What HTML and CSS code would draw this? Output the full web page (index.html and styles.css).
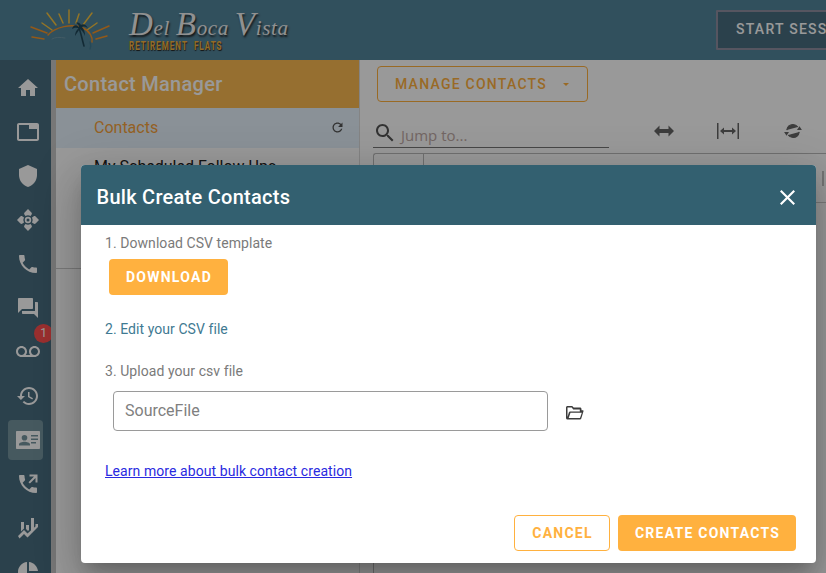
FILE: index.html
```html
<!DOCTYPE html>
<html lang="en">
<head>
<meta charset="utf-8">
<title>Bulk Create Contacts</title>
<link rel="stylesheet" href="styles.css">
</head>
<body>
<div class="app">
  <header class="topbar">
    <div class="logo">
      <svg class="sun" width="80" height="44" viewBox="30 8 80 44" fill="none" stroke-linecap="round">
        <g stroke="#f5c340" stroke-width="1.5">
          <path d="M47 13 L56 25"/><path d="M59 14 L63 23"/><path d="M69 10 L69 23"/><path d="M79 14 L76 23"/><path d="M92 13 L83 25"/><path d="M97 23 L87 30"/><path d="M42 23 L52 30"/>
        </g>
        <g stroke="#f59428" stroke-width="1.5">
          <path d="M31 27 L47 33"/><path d="M32 37 L44 39"/><path d="M109 26 L93 33"/><path d="M107 36 L96 39"/>
          <path d="M48 35 C55 27 72 23 83 28 C90 31 93 38 92 42"/>
        </g>
        <path d="M90 42 C91 45 91 47 90 49" stroke="#3f7a92" stroke-width="1.4"/>
        <path d="M79 28 C81 33 82 39 84 46" stroke="#1f4658" stroke-width="1.6"/>
        <path d="M79 27 C76 24 73 25 72 29 C75 27 77 28 79 28 C76 30 75 33 75 36 C77 33 79 30 80 29 C83 31 84 34 85 36 C85 32 84 29 82 27 C85 26 87 27 88 29 C87 25 83 23 81 25 C80 23 78 22 76 23 C78 24 79 25 79 27Z" fill="#1f4658"/>
        <path d="M52 39 C55 37 60 37 65 38" stroke="#6f97a8" stroke-width="1"/>
      </svg>
      <div class="brand">
        <span class="brand-name"><span class="cap">D</span>el <span class="cap">B</span>oca <span class="cap">V</span>ista</span>
        <span class="brand-sub">RETIREMENT&nbsp; FLATS</span>
      </div>
    </div>
    <button class="session">START SESSION</button>
  </header>
  <div class="body">
    <nav class="rail">
      <svg class="ico" viewBox="0 0 24 24"><path d="M10 20v-6h4v6h5v-8h3L12 3 2 12h3v8z"/></svg>
      <svg class="ico" viewBox="0 0 24 24"><path d="M21 3H3c-1.1 0-2 .9-2 2v14c0 1.1.9 2 2 2h18c1.1 0 2-.9 2-2V5c0-1.1-.9-2-2-2zm0 16H3V5h10v4h8v10z"/></svg>
      <svg class="ico" viewBox="0 0 24 24"><path d="M12 1L3 5v6c0 5.55 3.84 10.74 9 12 5.16-1.26 9-6.45 9-12V5l-9-4z"/></svg>
      <svg class="ico" viewBox="0 0 24 24"><path fill-rule="evenodd" d="M12 1l3.400 3.400c.6.6.6 1.500.2 2.100L14.500 8a5 5 0 0 0-5 0L8.400 6.500c-.4-.6-.4-1.500.2-2.100zM12 23l-3.400-3.400c-.6-.6-.6-1.500-.2-2.100L9.500 16a5 5 0 0 0 5 0l1.100 1.500c.4.6.4 1.500-.2 2.100zM1 12l3.400-3.400c.6-.6 1.500-.6 2.100-.2L8 9.500a5 5 0 0 0 0 5l-1.500 1.100c-.6.4-1.500.4-2.100-.2zM23 12l-3.400 3.400c-.6.6-1.500.6-2.100.2L16 14.500a5 5 0 0 0 0-5l1.500-1.100c.6-.4 1.500-.4 2.100.2zM12 8.800a3.200 3.200 0 1 0 0 6.400 3.200 3.200 0 0 0 0-6.400zm0 1.700a1.500 1.500 0 1 1 0 3 1.500 1.500 0 0 1 0-3z"/></svg>
      <svg class="ico" viewBox="0 0 24 24"><path d="M6.620 10.790c1.440 2.830 3.760 5.140 6.590 6.590l2.200-2.200c.27-.27.67-.36 1.020-.24 1.120.37 2.330.57 3.570.57.55 0 1 .45 1 1V20c0 .55-.45 1-1 1-9.390 0-17-7.610-17-17 0-.55.45-1 1-1h3.500c.55 0 1 .45 1 1 0 1.250.2 2.450.57 3.570.11.35.03.74-.25 1.020l-2.200 2.200z"/></svg>
      <svg class="ico" viewBox="0 0 24 24"><path d="M21 6h-2v9H6v2c0 .55.45 1 1 1h11l4 4V7c0-.55-.45-1-1-1zm-4 6V3c0-.55-.45-1-1-1H3c-.55 0-1 .45-1 1v14l4-4h10c.55 0 1-.45 1-1z"/></svg>
      <div class="rail-badge-wrap">
        <svg class="ico" viewBox="0 0 24 24"><path d="M18.500 6C15.460 6 13 8.460 13 11.500c0 1.330.47 2.550 1.260 3.500H9.740c.79-.95 1.260-2.170 1.260-3.500C11 8.460 8.540 6 5.500 6S0 8.460 0 11.500 2.460 17 5.500 17h13c3.040 0 5.500-2.460 5.500-5.500S21.540 6 18.500 6zm-13 9C3.570 15 2 13.430 2 11.500S3.570 8 5.500 8 9 9.570 9 11.500 7.430 15 5.500 15zm13 0c-1.930 0-3.500-1.570-3.500-3.500S16.570 8 18.500 8 22 9.570 22 11.500 20.430 15 18.500 15z"/></svg>
        <span class="badge">1</span>
      </div>
      <svg class="ico" viewBox="0 0 24 24"><path d="M13 3c-4.970 0-9 4.030-9 9H1l3.890 3.890.07.14L9 12H6c0-3.870 3.130-7 7-7s7 3.130 7 7-3.130 7-7 7c-1.930 0-3.680-.79-4.940-2.060l-1.420 1.420C8.270 19.990 10.510 21 13 21c4.970 0 9-4.030 9-9s-4.030-9-9-9zm-1 5v5l4.280 2.540.72-1.210-3.500-2.080V8H12z"/></svg>
      <div class="rail-active">
        <svg class="ico" viewBox="0 0 26 24"><path fill-rule="evenodd" d="M2 3h22c.6 0 1 .4 1 1v16c0 .6-.4 1-1 1H2c-.6 0-1-.4-1-1V4c0-.6.4-1 1-1zm7.500 4a2.800 2.800 0 1 0 0 5.600 2.800 2.800 0 0 0 0-5.600zM4 17.500h11v-1.200c0-1.600-3.200-2.600-5.500-2.600S4 14.700 4 16.300zM16 7v1.500h7V7zm0 3.500V12h7v-1.500zm0 3.500v1.500h5V14z"/></svg>
      </div>
      <svg class="ico" viewBox="0 0 24 24"><path d="M6.620 10.790c1.440 2.830 3.760 5.140 6.590 6.590l2.200-2.200c.27-.27.67-.36 1.020-.24 1.120.37 2.330.57 3.570.57.55 0 1 .45 1 1V20c0 .55-.45 1-1 1-9.390 0-17-7.610-17-17 0-.55.45-1 1-1h3.500c.55 0 1 .45 1 1 0 1.250.2 2.450.57 3.570.11.35.03.74-.25 1.020l-2.200 2.200z"/><path d="M13.500 2.500h8v8h-2V6l-5.600 5.600-1.400-1.400L18 4.500h-4.500z"/></svg>
      <svg class="ico" viewBox="0 0 24 24"><path d="M5 6h3v6.500l-3 3zM10 9h3v5l-1 1-2-2zM15 2h3v10.500l-3 3zM19.500 8H22v3l-2.500 2.500zM2 20l6-6 3.500 3.500L21 9v3l-9.500 9.500L8 18l-4.500 4.500z"/></svg>
      <svg class="ico" viewBox="0 0 24 24"><path d="M11 2v20c-5.100-.5-9-4.800-9-10s3.900-9.500 9-10zm2 0v9h9c-.5-4.700-4.300-8.500-9-9zm0 11v9c4.700-.5 8.500-4.300 9-9z"/></svg>
    </nav>
    <div class="strip"></div>
    <aside class="panel">
      <h2 class="panel-title">Contact Manager</h2>
      <div class="panel-row panel-row-active">
        <span>Contacts</span>
        <svg class="refresh" viewBox="0 0 24 24"><path d="M17.650 6.350C16.200 4.900 14.210 4 12 4c-4.420 0-7.990 3.580-7.990 8s3.570 8 7.990 8c3.730 0 6.840-2.550 7.730-6h-2.080c-.82 2.330-3.040 4-5.650 4-3.310 0-6-2.690-6-6s2.690-6 6-6c1.660 0 3.140.69 4.220 1.780L13 11h7V4l-2.350 2.350z"/></svg>
      </div>
      <div class="panel-row panel-row-plain"><span>My Scheduled Follow Ups</span></div>
      <div class="panel-rule"></div>
    </aside>
    <main class="content">
      <button class="manage">MANAGE CONTACTS<span class="caret"></span></button>
      <div class="tools">
        <div class="jump">
          <svg class="search" viewBox="3 3 18 18"><path d="M15.500 14h-.79l-.28-.27C15.410 12.590 16 11.110 16 9.500 16 5.910 13.090 3 9.500 3S3 5.910 3 9.500 5.910 16 9.500 16c1.610 0 3.090-.59 4.230-1.570l.27.28v.79l5 4.990L20.490 19l-4.990-5zm-6 0C7.010 14 5 11.990 5 9.500S7.010 5 9.500 5 14 7.010 14 9.500 11.990 14 9.500 14z"/></svg>
          <span class="jump-text">Jump to...</span>
        </div>
        <div class="tool-icons">
          <svg class="tool" viewBox="0 0 20 12"><path d="M0 6l5.500-5.500V4h9V.500L20 6l-5.500 5.500V8h-9v3.500z"/></svg>
          <svg class="tool" viewBox="0 0 22 16"><path d="M0 0h1.500v16H0zM20.500 0H22v16h-1.500zM3 8l4-3.500V7h8V4.500L19 8l-4 3.500V9H7v2.500z"/></svg>
          <svg class="tool tool-sync" viewBox="0 0 22 18" fill="none"><path d="M4 8C4.700 4.200 7.500 1.700 11 1.700c2.300 0 4.100 1 5.400 2.800M18 10c-.7 3.800-3.500 6.300-7 6.300-2.300 0-4.100-1-5.400-2.800" stroke="#666" stroke-width="1.300"/><path d="M15.500 8H21l-2.700-4.300zM6.500 10H1l2.700 4.300z" fill="#666"/></svg>
        </div>
      </div>
      <div class="grid">
        <div class="grid-head"><div class="grid-cell"></div><div class="grid-resize"></div></div>
        <div class="grid-body"></div>
      </div>
    </main>
  </div>
</div>

<div class="scrim">
  <section class="dialog">
    <header class="dialog-head">
      <h1 class="dialog-title">Bulk Create Contacts</h1>
      <svg class="close" viewBox="5 5 14 14"><path d="M19 6.410L17.590 5 12 10.590 6.410 5 5 6.410 10.590 12 5 17.590 6.410 19 12 13.410 17.590 19 19 17.590 13.410 12z"/></svg>
    </header>
    <div class="dialog-body">
      <p class="step step-first">1. Download CSV template</p>
      <button class="btn btn-fill btn-download">DOWNLOAD</button>
      <p class="step step-second">2. Edit your CSV file</p>
      <p class="step step-third">3. Upload your csv file</p>
      <div class="upload">
        <div class="field">SourceFile</div>
        <svg class="folder" viewBox="0 0 18 14"><path fill-rule="evenodd" d="M1.500 0h4.700l1.500 1.500h6.300c.8 0 1.500.7 1.500 1.500v1.200h1.200c.6 0 1 .5.8 1.100l-2.300 7.500c-.2.5-.6.700-1.100.700H1.500C.7 13.500 0 12.800 0 12V1.500C0 .7.700 0 1.500 0zM1.500 4.700v6.200l1.300-4.400c.2-.7.900-1.100 1.500-1.100h9.500v-2H7.200L5.700 1.500H1.500zM4.500 6.700l-1.800 5.300h11.300l1.800-5.300z"/></svg>
      </div>
      <a class="learn" href="#">Learn more about bulk contact creation</a>
    </div>
    <footer class="dialog-foot">
      <button class="btn btn-line">CANCEL</button>
      <button class="btn btn-fill btn-create">CREATE CONTACTS</button>
    </footer>
  </section>
</div>
</body>
</html>
```

FILE: styles.css
```css
* { box-sizing: border-box; }
html, body { margin: 0; height: 100%; overflow: hidden; }
body { font-family: Roboto, "Liberation Sans", sans-serif; background: #fff; }
button { font-family: inherit; cursor: pointer; }

.app { width: 826px; height: 573px; display: flex; flex-direction: column; overflow: hidden; }

.topbar { height: 60px; flex: none; background: #53859b; display: flex; align-items: center; justify-content: space-between; padding-left: 30px; }
.logo { display: flex; align-items: center; gap: 19px; height: 60px; }
.sun { display: block; }
.brand { display: flex; flex-direction: column; }
.brand-name { font-family: "Liberation Serif", serif; font-style: italic; font-size: 21px; line-height: 24px; letter-spacing: 0.65px; color: #f2f2f2; text-shadow: 1px 2px 2px #222; white-space: nowrap; margin-top: 3px; }
.cap { font-size: 33px; line-height: 24px; }
.brand-sub { font-size: 12px; font-weight: 700; line-height: 11px; letter-spacing: 1.5px; color: #f7b441; text-shadow: 1px 1px 1px #222; white-space: nowrap; transform: scaleX(.67); transform-origin: left center; margin-top: 1px; }
.session { width: 130px; height: 40px; margin-right: -20px; background: #496d7f; border: 2px solid #8f8ea0; border-radius: 1px; color: #fff; font-size: 14px; font-weight: 500; letter-spacing: 1.25px; text-align: left; padding: 0 0 2px 18px; white-space: nowrap; overflow: hidden; flex: none; }

.body { flex: 1; display: flex; min-height: 0; }
.rail { width: 51px; flex: none; background: #496d7f; display: flex; flex-direction: column; align-items: center; gap: 20px; padding: 16px 0 0 5px; overflow: hidden; }
.ico { width: 24px; height: 24px; fill: #fff; display: block; flex: none; }
.rail-badge-wrap { position: relative; width: 24px; height: 24px; flex: none; }
.badge { position: absolute; left: 18px; top: -16px; width: 19px; height: 19px; border-radius: 50%; background: #ff4f4f; color: #fff; font-size: 12px; line-height: 19px; text-align: center; }
.rail-active { width: 35px; height: 40px; margin: -8px 0 -8px 3px; align-self: flex-start; flex: none; border-radius: 4px; background: #76959f; display: flex; align-items: center; justify-content: center; padding-left: 5px; }
.rail-active .ico { width: 26px; }

.strip { width: 5px; flex: none; background: #c6c6c6; }
.panel { width: 304px; flex: none; display: flex; flex-direction: column; background: #fff; border-right: 1px solid #ddd; }
.panel-title { margin: 0; height: 48px; flex: none; background: #fbba50; color: #fff; font-size: 20px; font-weight: 500; letter-spacing: .28px; line-height: 48px; padding-left: 8px; }
.panel-row { height: 40px; flex: none; display: flex; align-items: center; justify-content: space-between; padding: 0 14px 2px 38px; font-size: 16px; color: #222; }
.panel-row-plain { padding-bottom: 4px; }
.panel-row-active { background: #e6f2fc; color: #f7a23b; }
.refresh { width: 15px; height: 15px; fill: #555; }
.panel-rule { margin-top: 80px; height: 1px; background: #ccc; }

.content { flex: 1; min-width: 0; padding: 6px 0 0 13px; display: flex; flex-direction: column; }
.manage { width: 211px; height: 36px; margin-left: 4px; flex: none; background: transparent; border: 1px solid #ffb13f; border-radius: 4px; color: #ffb13f; font-size: 14px; font-weight: 500; letter-spacing: 1.25px; text-align: left; padding: 0 0 0 17px; display: flex; align-items: center; white-space: nowrap; }
.caret { width: 0; height: 0; margin-left: 16px; border: 3.5px solid transparent; border-top-color: #ffb13f; border-bottom-width: 0; }
.tools { margin-top: 20px; display: flex; flex: none; }
.jump { width: 236px; height: 25px; border-bottom: 1px solid #777; display: flex; align-items: flex-start; gap: 7px; padding-left: 3px; margin-top: 1px; }
.search { width: 18px; height: 18px; fill: #555; margin-top: 1px; flex: none; }
.jump-text { font-family: "Open Sans", sans-serif; font-size: 15px; line-height: 22px; color: #bfaaa6; margin-top: 1px; white-space: nowrap; }
.tool-icons { display: flex; align-items: flex-start; gap: 0; }
.tool { height: 16px; fill: #666; display: block; margin-top: 1px; flex: none; }
.tool:nth-child(1) { width: 20px; margin-left: 45px; }
.tool:nth-child(2) { width: 22px; margin-left: 43px; }
.tool:nth-child(3) { width: 22px; margin-left: 43px; }
.grid { margin-top: 5px; flex: 1; border-left: 1px solid #bbb; border-top: 1px solid #bbb; border-top-left-radius: 3px; display: flex; flex-direction: column; }
.grid-head { height: 49px; flex: none; border-bottom: 1px solid #ccc; display: flex; justify-content: space-between; }
.grid-cell { width: 50px; height: 100%; border-right: 1px solid #bbb; }
.grid-resize { width: 2px; height: 15px; margin: 17px 2px 0 0; background: #c4c4c4; }

.scrim { position: absolute; inset: 0; background: rgba(0, 0, 0, .4); padding: 165px 10px 10px 81px; display: flex; }
.dialog { flex: 1; display: flex; flex-direction: column; background: #fff; border-radius: 4px; overflow: hidden; box-shadow: 0 11px 15px -7px rgba(0,0,0,.2), 0 24px 38px 3px rgba(0,0,0,.14), 0 9px 46px 8px rgba(0,0,0,.12); }
.dialog-head { height: 60px; flex: none; background: #336070; display: flex; align-items: center; justify-content: space-between; padding: 4px 21px 0 15.500px; }
.dialog-title { margin: 0; color: #fff; font-size: 20px; font-weight: 500; letter-spacing: .27px; line-height: 24px; }
.close { width: 15px; height: 15px; fill: #fff; display: block; }

.dialog-body { flex: 1; min-height: 0; display: flex; flex-direction: column; align-items: flex-start; padding: 0 0 0 24px; }
.step { margin: 0; font-size: 14px; line-height: 20px; letter-spacing: .06px; color: #7a7a7a; }
.step-first { margin-top: 8px; }
.step-second { margin-top: 24px; color: #3f7a92; }
.step-third { margin-top: 22px; }
.btn { height: 36px; border-radius: 4px; font-size: 14px; font-weight: 700; letter-spacing: 1.25px; white-space: nowrap; padding: 0 0 0 1px; }
.btn-fill { background: #ffb13f; border: 0; color: #fff; }
.btn-line { background: #fff; border: 1px solid #ffb13f; color: #ffb13f; }
.btn-download { width: 119px; margin: 6px 0 0 4px; }
.upload { margin: 10px 0 0 8px; display: flex; align-items: center; }
.field { width: 435px; height: 40px; border: 1px solid #9a9a9a; border-radius: 4px; font-size: 16px; line-height: 38px; padding-left: 11px; color: #808080; }
.folder { width: 18px; height: 14px; fill: #3c3c3c; display: block; margin: 3px 0 0 18px; }
.learn { margin: 31px 0 0 0; font-size: 14px; line-height: 18px; color: #2a2ae0; letter-spacing: .07px; }

.dialog-foot { flex: none; display: flex; justify-content: flex-end; gap: 8px; padding: 0 20px 12px; }
.btn-line { width: 96px; }
.btn-create { width: 178px; }
```
